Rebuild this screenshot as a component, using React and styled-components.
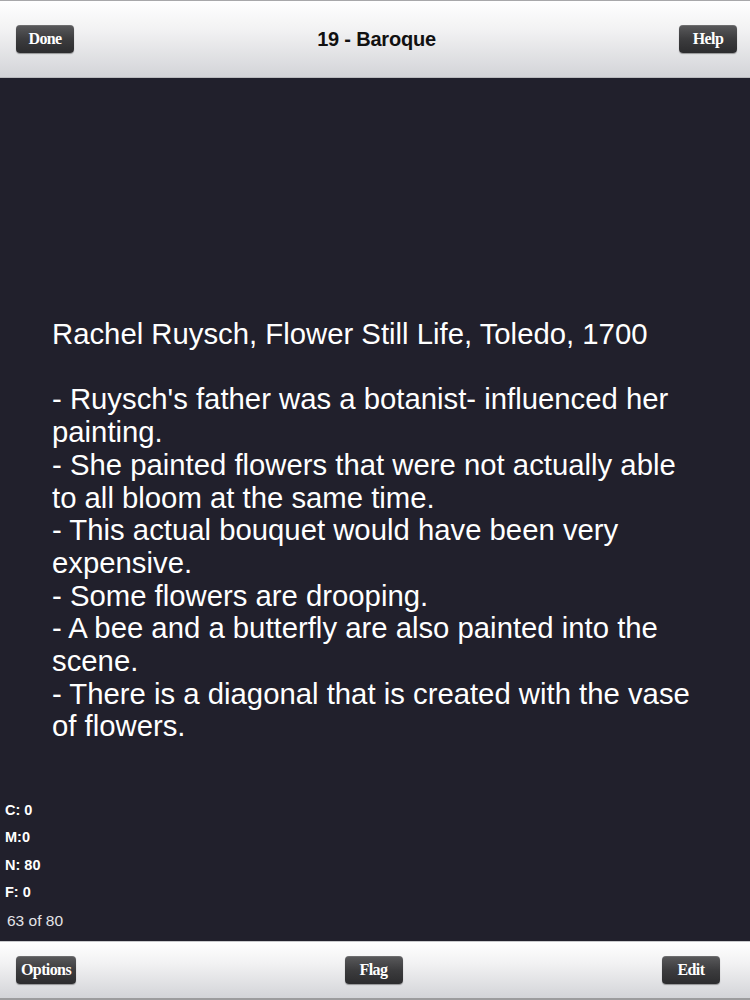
import styled, { createGlobalStyle } from "styled-components";

const GlobalStyle = createGlobalStyle`
  html, body {
    margin: 0;
    padding: 0;
    background: #21202c;
  }
`;

const stats = [
  { label: "C:", value: "0", gap: true },
  { label: "M:", value: "0", gap: false },
  { label: "N:", value: "80", gap: true },
  { label: "F:", value: "0", gap: true },
];

const notes = [
  "- Ruysch's father was a botanist- influenced her painting.",
  "- She painted flowers that were not actually able to all bloom at the same time.",
  "- This actual bouquet would have been very expensive.",
  "- Some flowers are drooping.",
  "- A bee and a butterfly are also painted into the scene.",
  "- There is a diagonal that is created with the vase of flowers.",
];

const App = () => {
  return (
    <Screen>
      <GlobalStyle />
      <TopBar>
        <BarButton>Done</BarButton>
        <Title>19 - Baroque</Title>
        <BarButton>Help</BarButton>
      </TopBar>
      <Main>
        <Card>
          <CardLine>Rachel Ruysch, Flower Still Life, Toledo, 1700</CardLine>
          <Blank />
          {notes.map((n) => (
            <CardLine key={n}>{n}</CardLine>
          ))}
        </Card>
        <Stats>
          {stats.map((s) => (
            <StatRow key={s.label}>
              {s.label}
              {s.gap ? " " : ""}
              {s.value}
            </StatRow>
          ))}
          <Counter>63 of 80</Counter>
        </Stats>
      </Main>
      <BottomBar>
        <BarButton>Options</BarButton>
        <BarButton $shift={9}>Flag</BarButton>
        <BarButton>Edit</BarButton>
      </BottomBar>
    </Screen>
  );
};

const Screen = styled.div`
  width: 750px;
  height: 1000px;
  display: flex;
  flex-direction: column;
  background: #21202c;
  overflow: hidden;
`;

const Bar = styled.div`
  display: flex;
  align-items: center;
  justify-content: space-between;
  box-sizing: border-box;
  background: linear-gradient(#ffffff 0%, #f1f1f2 40%, #d3d4d8 100%);
`;

const TopBar = styled(Bar)`
  height: 78px;
  padding: 0 13px 0 16px;
  border-top: 1px solid #a8a8aa;
  border-bottom: 1px solid #b9babe;
`;

const BottomBar = styled(Bar)`
  height: 59px;
  padding: 0 30px 0 16px;
  border-top: 1px solid #c9cacd;
  border-bottom: 2px solid #9c9c9e;
`;

const BarButton = styled.div`
  height: 28px;
  min-width: 58px;
  padding: 0 5px;
  margin-left: ${(p) => p.$shift || 0}px;
  box-sizing: border-box;
  display: flex;
  align-items: center;
  justify-content: center;
  border-radius: 4px;
  background: linear-gradient(#5a5a5c 0%, #3c3c3e 50%, #2c2c2e 100%);
  box-shadow: 0 1px 1px rgba(0, 0, 0, 0.35), inset 0 1px 0 rgba(255, 255, 255, 0.12);
  color: #ffffff;
  font-family: "Liberation Serif", "Times New Roman", serif;
  font-weight: bold;
  font-size: 16px;
  letter-spacing: -0.6px;
`;

const Title = styled.div`
  font-family: "Liberation Sans", Arial, sans-serif;
  font-weight: bold;
  font-size: 20px;
  color: #111111;
  letter-spacing: -0.2px;
`;

const Main = styled.div`
  flex: 1;
  display: flex;
  flex-direction: column;
  padding-top: 240px;
`;

const Card = styled.div`
  width: 648px;
  margin-left: 52px;
  color: #ffffff;
  font-family: "Liberation Sans", Arial, sans-serif;
  font-size: 29.3px;
  line-height: 32.7px;
`;

const CardLine = styled.div``;

const Blank = styled.div`
  height: 32.7px;
`;

const Stats = styled.div`
  margin-top: auto;
  padding: 0 0 7px 5px;
  color: #ffffff;
  font-family: "Liberation Sans", Arial, sans-serif;
`;

const StatRow = styled.div`
  height: 27.5px;
  line-height: 27.5px;
  font-size: 14.5px;
  font-weight: bold;
`;

const Counter = styled.div`
  height: 27.5px;
  line-height: 27.5px;
  font-size: 15.5px;
  padding-left: 2px;
  color: #e4e4e8;
`;

export default App;
